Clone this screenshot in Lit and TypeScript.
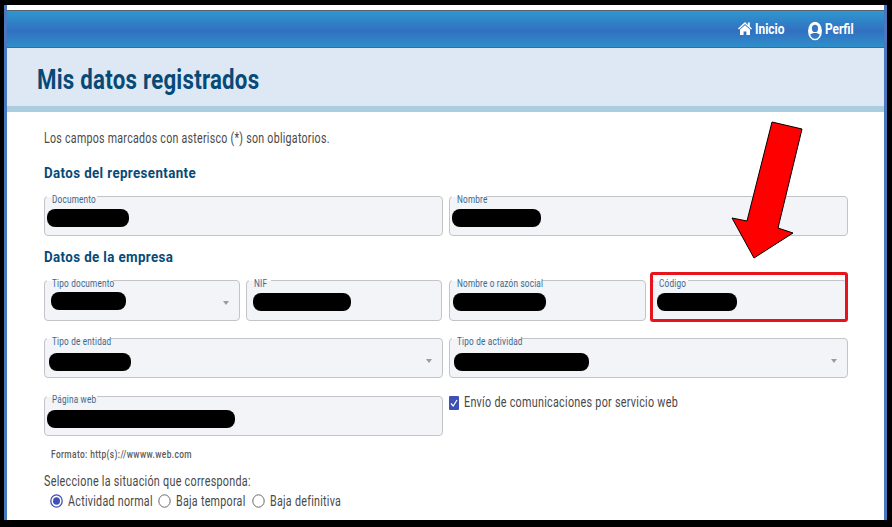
import { LitElement, html, css } from "lit";
import { customElement } from "lit/decorators.js";

@customElement("app-root")
export class AppRoot extends LitElement {
  static styles = css`
    :host { display: block; width: 892px; height: 527px; overflow: hidden; background: #000; font-family: Roboto, "Liberation Sans", sans-serif; color: #484848; position: relative; }
    * { box-sizing: border-box; }
    .sq { display: inline-block; transform-origin: left center; transform: scaleX(var(--sx, .76)); white-space: nowrap; }
    .frame { position: absolute; left: 4px; top: 5px; width: 883px; height: 515px; background: #fff; border-left: 3px solid #4a78bc; border-right: 3px solid #4a78bc; padding-top: 5px; overflow: hidden; }
    .top { height: 38px; background: linear-gradient(#2e98cf, #3170c1 55%, #2f8fca); border-top: 1px solid #596470; border-bottom: 1px solid #596470; display: flex; justify-content: flex-end; align-items: center; padding-right: 29px; color: #fff; font-weight: 700; font-size: 14.5px; gap: 23px; --sx: .82; }
    .nav { display: flex; align-items: center; gap: 3px; width: 47px; }
    .nav svg { flex: none; }
    .band { height: 64px; background: #dde8f4; border-bottom: 6px solid #aacde0; padding: 14px 0 0 30px; }
    h1 { margin: 0; font-size: 28px; line-height: 36px; font-weight: 700; color: #074a78; letter-spacing: .3px; --sx: .795; }
    .main { padding: 18px 36px 0 37px; font-size: 14px; }
    p { margin: 0; line-height: 16px; letter-spacing: .35px; --sx: .76; }
    p.sel { --sx: .77; margin-top: 12px; }
    h2 { margin: 0; font-size: 15.5px; line-height: 18px; font-weight: 700; color: #074a78; letter-spacing: .45px; --sx: .86; }
    .r2 { display: grid; grid-template-columns: 399px 399px; gap: 6px; }
    .r4 { display: grid; grid-template-columns: 196px 196px 197px 196px; gap: 6px; }
    .r4 > :nth-child(3) { margin-left: 1px; width: 197px; }
    .r4 .f { height: 41px; }
    .f { position: relative; height: 40px; background: #f3f4f8; border: 1px solid #c3c4c8; border-radius: 4px; }
    .f label { position: absolute; left: 2px; top: -2px; padding: 0 0 0 5px; height: 11px; line-height: 9px; font-size: 11.5px; color: #40688c; background: linear-gradient(#fff 2px, #f3f4f8 2px); letter-spacing: .3px; width: var(--w); --sx: .71; }
    .red { position: absolute; background: #000; height: 18px; border-radius: 8px; }
    .caret { position: absolute; right: 10px; top: 20px; width: 0; height: 0; border-left: 3px solid transparent; border-right: 3px solid transparent; border-top: 4px solid #9b9b9b; }
    .code { position: absolute; inset: -9px -2px -2px -2px; border: 3px solid #e8141c; border-radius: 3px; pointer-events: none; }
    .chk { display: flex; gap: 5px; align-items: flex-start; height: 40px; letter-spacing: .35px; line-height: 12px; --sx: .77; }
    .box { width: 10px; height: 14px; background: #3f51b5; border-radius: 1px; flex: none; display: block; }
    .hint { font-size: 11px; font-weight: 500; color: #5a5a5a; line-height: 12px; margin: 13px 0 0 7px; letter-spacing: .5px; --sx: .76; }
    .opts { display: flex; align-items: center; margin: 4px 0 0 6px; height: 16px; letter-spacing: .35px; --sx: .765; }
    .opt { display: flex; align-items: center; gap: 5px; margin-right: 6px; }
    .rad { width: 13px; height: 14px; flex: none; display: block; }
    .arrow { position: absolute; left: 0; top: 0; width: 892px; height: 527px; pointer-events: none; }
  `;

  private field(label: string, w: number, l: number, rw: number, top = 12, caret = false, extra?: unknown) {
    return html`<div class="f"><label style="--w:${w}px"><span class="sq">${label}</span></label><div class="red" style="left:${l}px;width:${rw}px;top:${top}px"></div>${caret ? html`<div class="caret"></div>` : ""}${extra ?? ""}</div>`;
  }

  render() {
    return html`
      <div class="frame">
        <div class="top">
          <div class="nav"><svg width="14" height="15" viewBox="0 0 14 15" style="margin-top:-2px"><path fill="#fff" d="M7 1 0 7.600l.9 1L7 3l6.100 5.600.9-1-2.200-2V1.600h-1.900v2.300L7 1Z"/><path fill="#fff" d="M7 4.200 2 8.600V14h3.600v-3.600h2.800V14H12V8.600L7 4.200Z"/></svg><span class="sq">Inicio</span></div>
          <div class="nav"><svg width="14" height="20" viewBox="0 0 14 20" style="margin-top:3px"><ellipse cx="7" cy="10" rx="6.200" ry="8.600" fill="none" stroke="#fff" stroke-width="1.500"/><path fill="#fff" d="M1 9.500C1 4.500 3.500 1.500 7 1.500s6 3 6 8c0 1.800-.5 3.200-1 4.200C10.800 12.500 9 12 7 12s-3.800.5-5 1.700c-.5-1-1-2.400-1-4.200Z"/><ellipse cx="7" cy="7.400" rx="3.100" ry="3.700" fill="#3478c3"/></svg><span class="sq">Perfil</span></div>
        </div>
        <div class="band"><h1><span class="sq">Mis datos registrados</span></h1></div>
        <div class="main">
          <p><span class="sq">Los campos marcados con asterisco (*) son obligatorios.</span></p>
          <h2 style="margin-top:18px"><span class="sq">Datos del representante</span></h2>
          <div class="r2" style="margin-top:14px">
            ${this.field("Documento", 50, 2, 82)}
            ${this.field("Nombre", 34, 2, 89)}
          </div>
          <h2 style="margin-top:12px"><span class="sq">Datos de la empresa</span></h2>
          <div class="r4" style="margin-top:14px">
            ${this.field("Tipo documento", 66, 6, 75, 11, true)}
            ${this.field("NIF", 22, 6, 98, 12)}
            ${this.field("Nombre o razón social", 90, 3, 93, 12)}
            ${this.field("Código", 34, 5, 80, 12, false, html`<div class="code"></div>`)}
          </div>
          <div class="r2" style="margin-top:17px">
            ${this.field("Tipo de entidad", 64, 4, 82, 14, true)}
            ${this.field("Tipo de actividad", 70, 4, 135, 14, true)}
          </div>
          <div class="r2" style="margin-top:18px">
            ${this.field("Página web", 50, 2, 188, 13)}
            <div class="chk"><svg class="box" viewBox="0 0 10 14"><path d="M2 7.500 4.200 10 8 4" fill="none" stroke="#fff" stroke-width="1.200"/></svg><span class="sq">Envío de comunicaciones por servicio web</span></div>
          </div>
          <div class="hint"><span class="sq">Formato: http(s)://wwww.web.com</span></div>
          <p class="sel"><span class="sq">Seleccione la situación que corresponda:</span></p>
          <div class="opts">
            <div class="opt"><svg class="rad" viewBox="0 0 13 14"><ellipse cx="6.500" cy="7" rx="5.700" ry="6.200" fill="none" stroke="#3f51b5" stroke-width="1.300"/><ellipse cx="6.500" cy="7" rx="3.500" ry="3.800" fill="#3f51b5"/></svg><span class="sq" style="width:84px">Actividad normal</span></div>
            <div class="opt"><svg class="rad" viewBox="0 0 13 14"><ellipse cx="6.500" cy="7" rx="5.700" ry="6.200" fill="none" stroke="#6a6a6a" stroke-width="1"/></svg><span class="sq" style="width:70px">Baja temporal</span></div>
            <div class="opt"><svg class="rad" viewBox="0 0 13 14"><ellipse cx="6.500" cy="7" rx="5.700" ry="6.200" fill="none" stroke="#6a6a6a" stroke-width="1"/></svg><span class="sq">Baja definitiva</span></div>
          </div>
        </div>
      </div>
      <svg class="arrow" viewBox="0 0 892 527"><polygon points="772,122 802,129 778,228 793,233 754,258 732,218 747,221" fill="#ff0000" stroke="#000" stroke-width="1"/></svg>
    `;
  }
}
